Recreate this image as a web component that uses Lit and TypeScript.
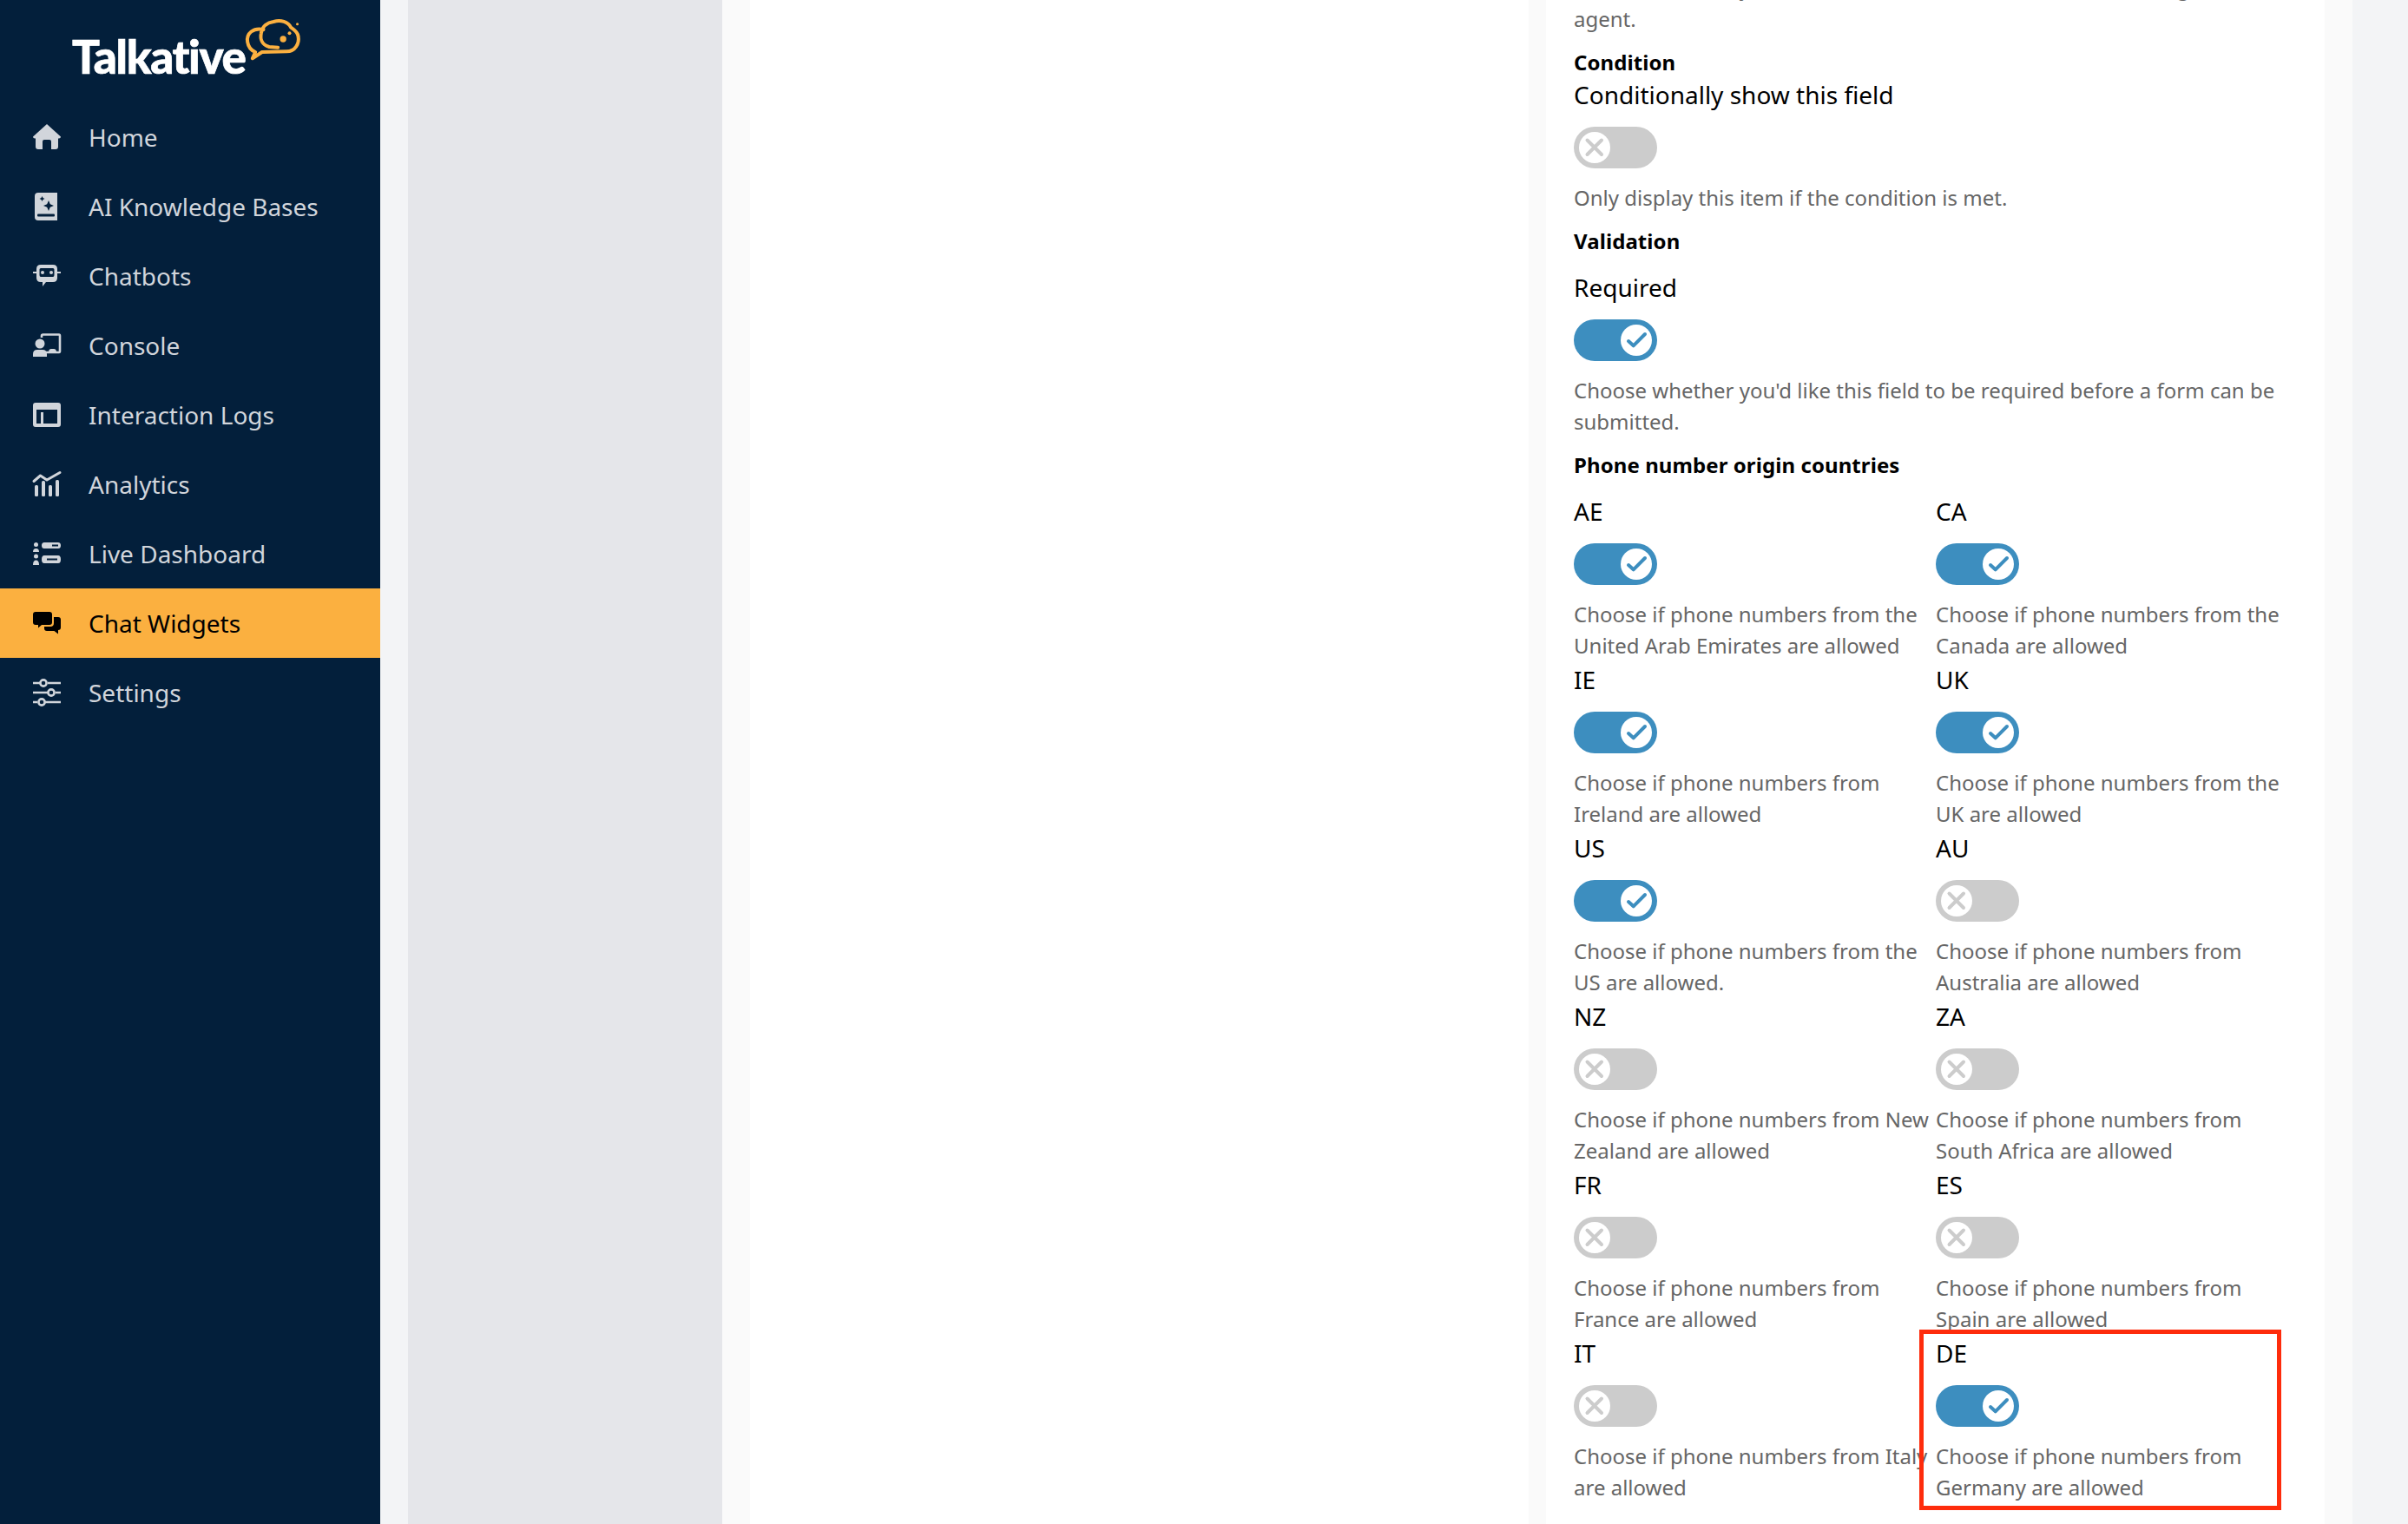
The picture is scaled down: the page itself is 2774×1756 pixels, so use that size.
import { LitElement, html, css, svg } from "lit";
import { customElement } from "lit/decorators.js";

const icons: Record<string, unknown> = {
  home: svg`<path d="M16 1 L32 15.5 Q32 18 29 17.5 V27 Q29 30 26 30 H21 V21 Q21 19 19 19 H13 Q11 19 11 21 V30 H6 Q3 30 3 27 V17.5 Q0 18 0 15.5 Z" fill="currentColor"/>`,
  book: svg`<path d="M6 0 H28 V25 L28 32 H6 Q2 32 2 28 V4 Q2 0 6 0 Z" fill="currentColor"/>
    <path d="M18 9 L19.8 13.2 L24 15 L19.8 16.8 L18 21 L16.2 16.8 L12 15 L16.2 13.2 Z M10.5 4 L11.5 6 L13.5 7 L11.5 8 L10.5 10 L9.5 8 L7.5 7 L9.5 6 Z" fill="#031f3b"/>
    <rect x="5" y="24.5" width="20" height="3" rx="1" fill="#031f3b"/>`,
  bot: svg`<path fill-rule="evenodd" d="M9 3 H23 Q28 3 28 8 V18 Q28 23 23 23 H15 L11 28 V23 H9 Q4 23 4 18 V8 Q4 3 9 3 Z M9 7 Q7.5 7 7.5 8.5 V15 Q7.5 17 9 17 H23 Q24.5 17 24.5 15 V8.5 Q24.5 7 23 7 Z" fill="currentColor"/>
    <rect x="0" y="11" width="4" height="2" fill="currentColor"/><rect x="28" y="11" width="4" height="2" fill="currentColor"/>
    <circle cx="11" cy="12" r="2" fill="currentColor"/><circle cx="21" cy="12" r="2" fill="currentColor"/>`,
  console: svg`<path d="M10 7 V5 Q10 3.5 11.5 3.5 H30 Q31 3.5 31 5 V22.5 Q31 24 30 24 H15" fill="none" stroke="currentColor" stroke-width="2.6"/>
    <circle cx="8" cy="14" r="5.5" fill="currentColor"/>
    <path d="M0 29 V26 Q0 21 5 21 H11 Q16 21 16 26 V29 Z" fill="currentColor"/>
    <path d="M18 24 Q18 20 21 20 H24 Q27 20 27 24 Z" fill="currentColor"/>`,
  logs: svg`<path fill-rule="evenodd" d="M3 2 H29 Q32 2 32 5 V27 Q32 30 29 30 H3 Q0 30 0 27 V5 Q0 2 3 2 Z M4 10 V26 H9 V13 H28 V10 Z M12 13 V26 H28 V13 Z" fill="currentColor"/>`,
  analytics: svg`<path d="M1 11.5 L8.5 5 L16 10 L31 1.5" fill="none" stroke="currentColor" stroke-width="3" stroke-linecap="round" stroke-linejoin="round" transform="translate(0 1)"/>
    <rect x="2" y="17" width="4" height="13" rx="1.5" fill="currentColor"/><rect x="10" y="12" width="4" height="18" rx="1.5" fill="currentColor"/><rect x="18" y="17" width="4" height="13" rx="1.5" fill="currentColor"/><rect x="26" y="11" width="4" height="19" rx="1.5" fill="currentColor"/>`,
  live: svg`<circle cx="3.5" cy="5.5" r="2.5" fill="currentColor"/><path d="M0 14 Q0 10 3.5 10 Q7 10 7 14 Z" fill="currentColor"/>
    <circle cx="3.5" cy="19" r="2.5" fill="currentColor"/><path d="M0 29 Q0 23.5 3.5 23.5 Q7 23.5 7 29 Z" fill="currentColor"/>
    <path fill-rule="evenodd" d="M13 3 H29 Q32 3 32 6.5 Q32 10 29 10 H13 Q10 10 10 6.5 Q10 3 13 3 Z M22 5.5 V7.5 H29 V5.5 Z" fill="currentColor"/>
    <path fill-rule="evenodd" d="M13 18 H29 Q32 18 32 22.5 Q32 27 29 27 H13 Q10 27 10 22.5 Q10 18 13 18 Z M16 21.5 V23.5 H28 V21.5 Z" fill="currentColor"/>`,
  chat: svg`<path d="M3 3 H19 Q22 3 22 6 V15 Q22 18 19 18 H10 L6 21.5 V18 H3 Q0 18 0 15 V6 Q0 3 3 3 Z" fill="currentColor"/>
    <path d="M24 9 H29 Q32 9 32 12 V21 Q32 24 29 24 V28.5 L24.5 25 H16 Q13 25 13 22 V20 H20 Q24 20 24 16 Z" fill="currentColor"/>`,
  settings: svg`<g fill="none" stroke="currentColor" stroke-width="2.6"><path d="M0 5 H8 M17 5 H32 M0 16 H17 M26 16 H32 M0 27 H5 M14 27 H32"/><circle cx="12" cy="5" r="3.6"/><circle cx="21" cy="16" r="3.6"/><circle cx="10" cy="27" r="3.6"/></g>`,
};

const nav = [
  ["home", "Home"],
  ["book", "AI Knowledge Bases"],
  ["bot", "Chatbots"],
  ["console", "Console"],
  ["logs", "Interaction Logs"],
  ["analytics", "Analytics"],
  ["live", "Live Dashboard"],
  ["chat", "Chat Widgets"],
  ["settings", "Settings"],
];

const countries: [string, boolean, string][] = [
  ["AE", true, "Choose if phone numbers from the United Arab Emirates are allowed"],
  ["CA", true, "Choose if phone numbers from the Canada are allowed"],
  ["IE", true, "Choose if phone numbers from Ireland are allowed"],
  ["UK", true, "Choose if phone numbers from the UK are allowed"],
  ["US", true, "Choose if phone numbers from the US are allowed."],
  ["AU", false, "Choose if phone numbers from Australia are allowed"],
  ["NZ", false, "Choose if phone numbers from New Zealand are allowed"],
  ["ZA", false, "Choose if phone numbers from South Africa are allowed"],
  ["FR", false, "Choose if phone numbers from France are allowed"],
  ["ES", false, "Choose if phone numbers from Spain are allowed"],
  ["IT", false, "Choose if phone numbers from Italy are allowed"],
  ["DE", true, "Choose if phone numbers from Germany are allowed"],
];

@customElement("app-root")
export class AppRoot extends LitElement {
  static styles = css`
    :host {
      display: flex;
      width: 2774px;
      height: 1756px;
      overflow: hidden;
      font-family: "Noto Sans", sans-serif;
      background: #f3f4f6;
    }
    .sidebar {
      width: 438px;
      flex: none;
      background: #031f3b;
      color: #d1d5db;
    }
    .logo {
      height: 118px;
      display: flex;
      align-items: flex-start;
      padding-left: 83px;
      box-sizing: border-box;
    }
    .logo-text {
      font-family: Lato, sans-serif;
      font-weight: 900;
      font-size: 53px;
      line-height: 64px;
      margin-top: 33px;
      letter-spacing: -1.4px;
      color: #fff;
      -webkit-text-stroke: 0.7px #fff;
    }
    .logo svg {
      margin: 20px 0 0 -2px;
      flex: none;
    }
    .item {
      height: 80px;
      display: flex;
      align-items: center;
      padding-left: 38px;
      gap: 32px;
      font-size: 28px;
    }
    .item svg {
      width: 32px;
      height: 32px;
      flex: none;
      overflow: visible;
    }
    .item.active {
      background: #fbb040;
      color: #000;
    }
    .main {
      flex: 1;
      display: flex;
      padding: 0 64px 0 32px;
    }
    .panel {
      width: 362px;
      flex: none;
      background: #e5e6ea;
    }
    .area {
      flex: 1;
      display: flex;
      gap: 20px;
      padding: 0 32px;
      background: #fafafa;
    }
    .card {
      width: 897px;
      flex: none;
      background: #fff;
    }
    .form {
      box-sizing: border-box;
      padding: 0 32px;
      margin-top: -32px;
    }
    .desc {
      font-size: 24px;
      line-height: 36px;
      color: #666;
    }
    .heading {
      font-size: 24px;
      line-height: 33px;
      font-weight: 700;
      letter-spacing: 0.08px;
      color: #000;
      margin-top: 15px;
    }
    .heading.spaced {
      margin-bottom: 16px;
    }
    .label {
      font-size: 28px;
      line-height: 42px;
      color: #000;
    }
    .toggle {
      width: 96px;
      height: 48px;
      border-radius: 24px;
      background: #ccc;
      margin: 16px 0;
      display: flex;
      align-items: center;
      padding: 0 6px;
      box-sizing: border-box;
    }
    .toggle.on {
      background: #3d8ebf;
      justify-content: flex-end;
    }
    .knob {
      width: 36px;
      height: 36px;
      border-radius: 50%;
      background: #fff;
      display: block;
    }
    .grid {
      display: grid;
      grid-template-columns: 417px 417px;
      margin-top: 16px;
    }
    .cell {
      position: relative;
      min-width: 0;
    }
    .mark {
      position: absolute;
      top: -6px;
      left: -19px;
      right: 19px;
      bottom: -8px;
      border: 5px solid #fe2c0c;
      pointer-events: none;
    }
  `;

  private toggle(on: boolean) {
    return html`<div class="toggle ${on ? "on" : ""}">
      <svg class="knob" viewBox="0 0 36 36">
        ${on
          ? svg`<path d="M9 19 L14.7 24.3 L28 11" fill="none" stroke="#3d8ebf" stroke-width="4" stroke-linecap="round" stroke-linejoin="round"/>`
          : svg`<path d="M9.5 9.5 L26 26 M26 9.5 L9.5 26" fill="none" stroke="#ccc" stroke-width="4" stroke-linecap="round"/>`}
      </svg>
    </div>`;
  }

  render() {
    return html`
      <aside class="sidebar">
        <div class="logo">
          <span class="logo-text">Talkative</span>
          <svg width="67" height="50" viewBox="630 30 200 150">
            <path d="M700 72 C665 65 640 85 645 115 C648 135 660 145 672 150 L662 172 L695 150 L780 148 C810 148 825 120 820 95 C818 80 805 72 795 65 C785 45 760 38 735 45 C715 48 695 60 692 85 C688 105 695 125 720 132 L750 134" fill="none" stroke="#fbb040" stroke-width="12" stroke-linejoin="round" stroke-linecap="round"/>
            <circle cx="768" cy="105" r="11" fill="#fbb040"/>
            <circle cx="790" cy="85" r="6" fill="#fbb040"/>
            <circle cx="817" cy="53" r="4.5" fill="#fbb040"/>
          </svg>
        </div>
        ${nav.map(
          ([icon, label]) => html`<div class="item ${label === "Chat Widgets" ? "active" : ""}">
            <svg viewBox="0 0 32 32">${icons[icon]}</svg><span>${label}</span>
          </div>`
        )}
      </aside>
      <main class="main">
        <div class="panel"></div>
        <div class="area">
          <div class="card"></div>
          <div class="card">
            <div class="form">
              <div class="desc">Choose whether you'd like this field to be shown in the chat log for the agent.</div>
              <div class="heading">Condition</div>
              <div class="label">Conditionally show this field</div>
              ${this.toggle(false)}
              <div class="desc">Only display this item if the condition is met.</div>
              <div class="heading spaced">Validation</div>
              <div class="label">Required</div>
              ${this.toggle(true)}
              <div class="desc">Choose whether you'd like this field to be required before a form can be submitted.</div>
              <div class="heading">Phone number origin countries</div>
              <div class="grid">
                ${countries.map(
                  ([code, on, text]) => html`<div class="cell">
                    <div class="label">${code}</div>
                    ${this.toggle(on)}
                    <div class="desc">${text}</div>
                    ${code === "DE" ? html`<div class="mark"></div>` : ""}
                  </div>`
                )}
              </div>
            </div>
          </div>
        </div>
      </main>
    `;
  }
}
